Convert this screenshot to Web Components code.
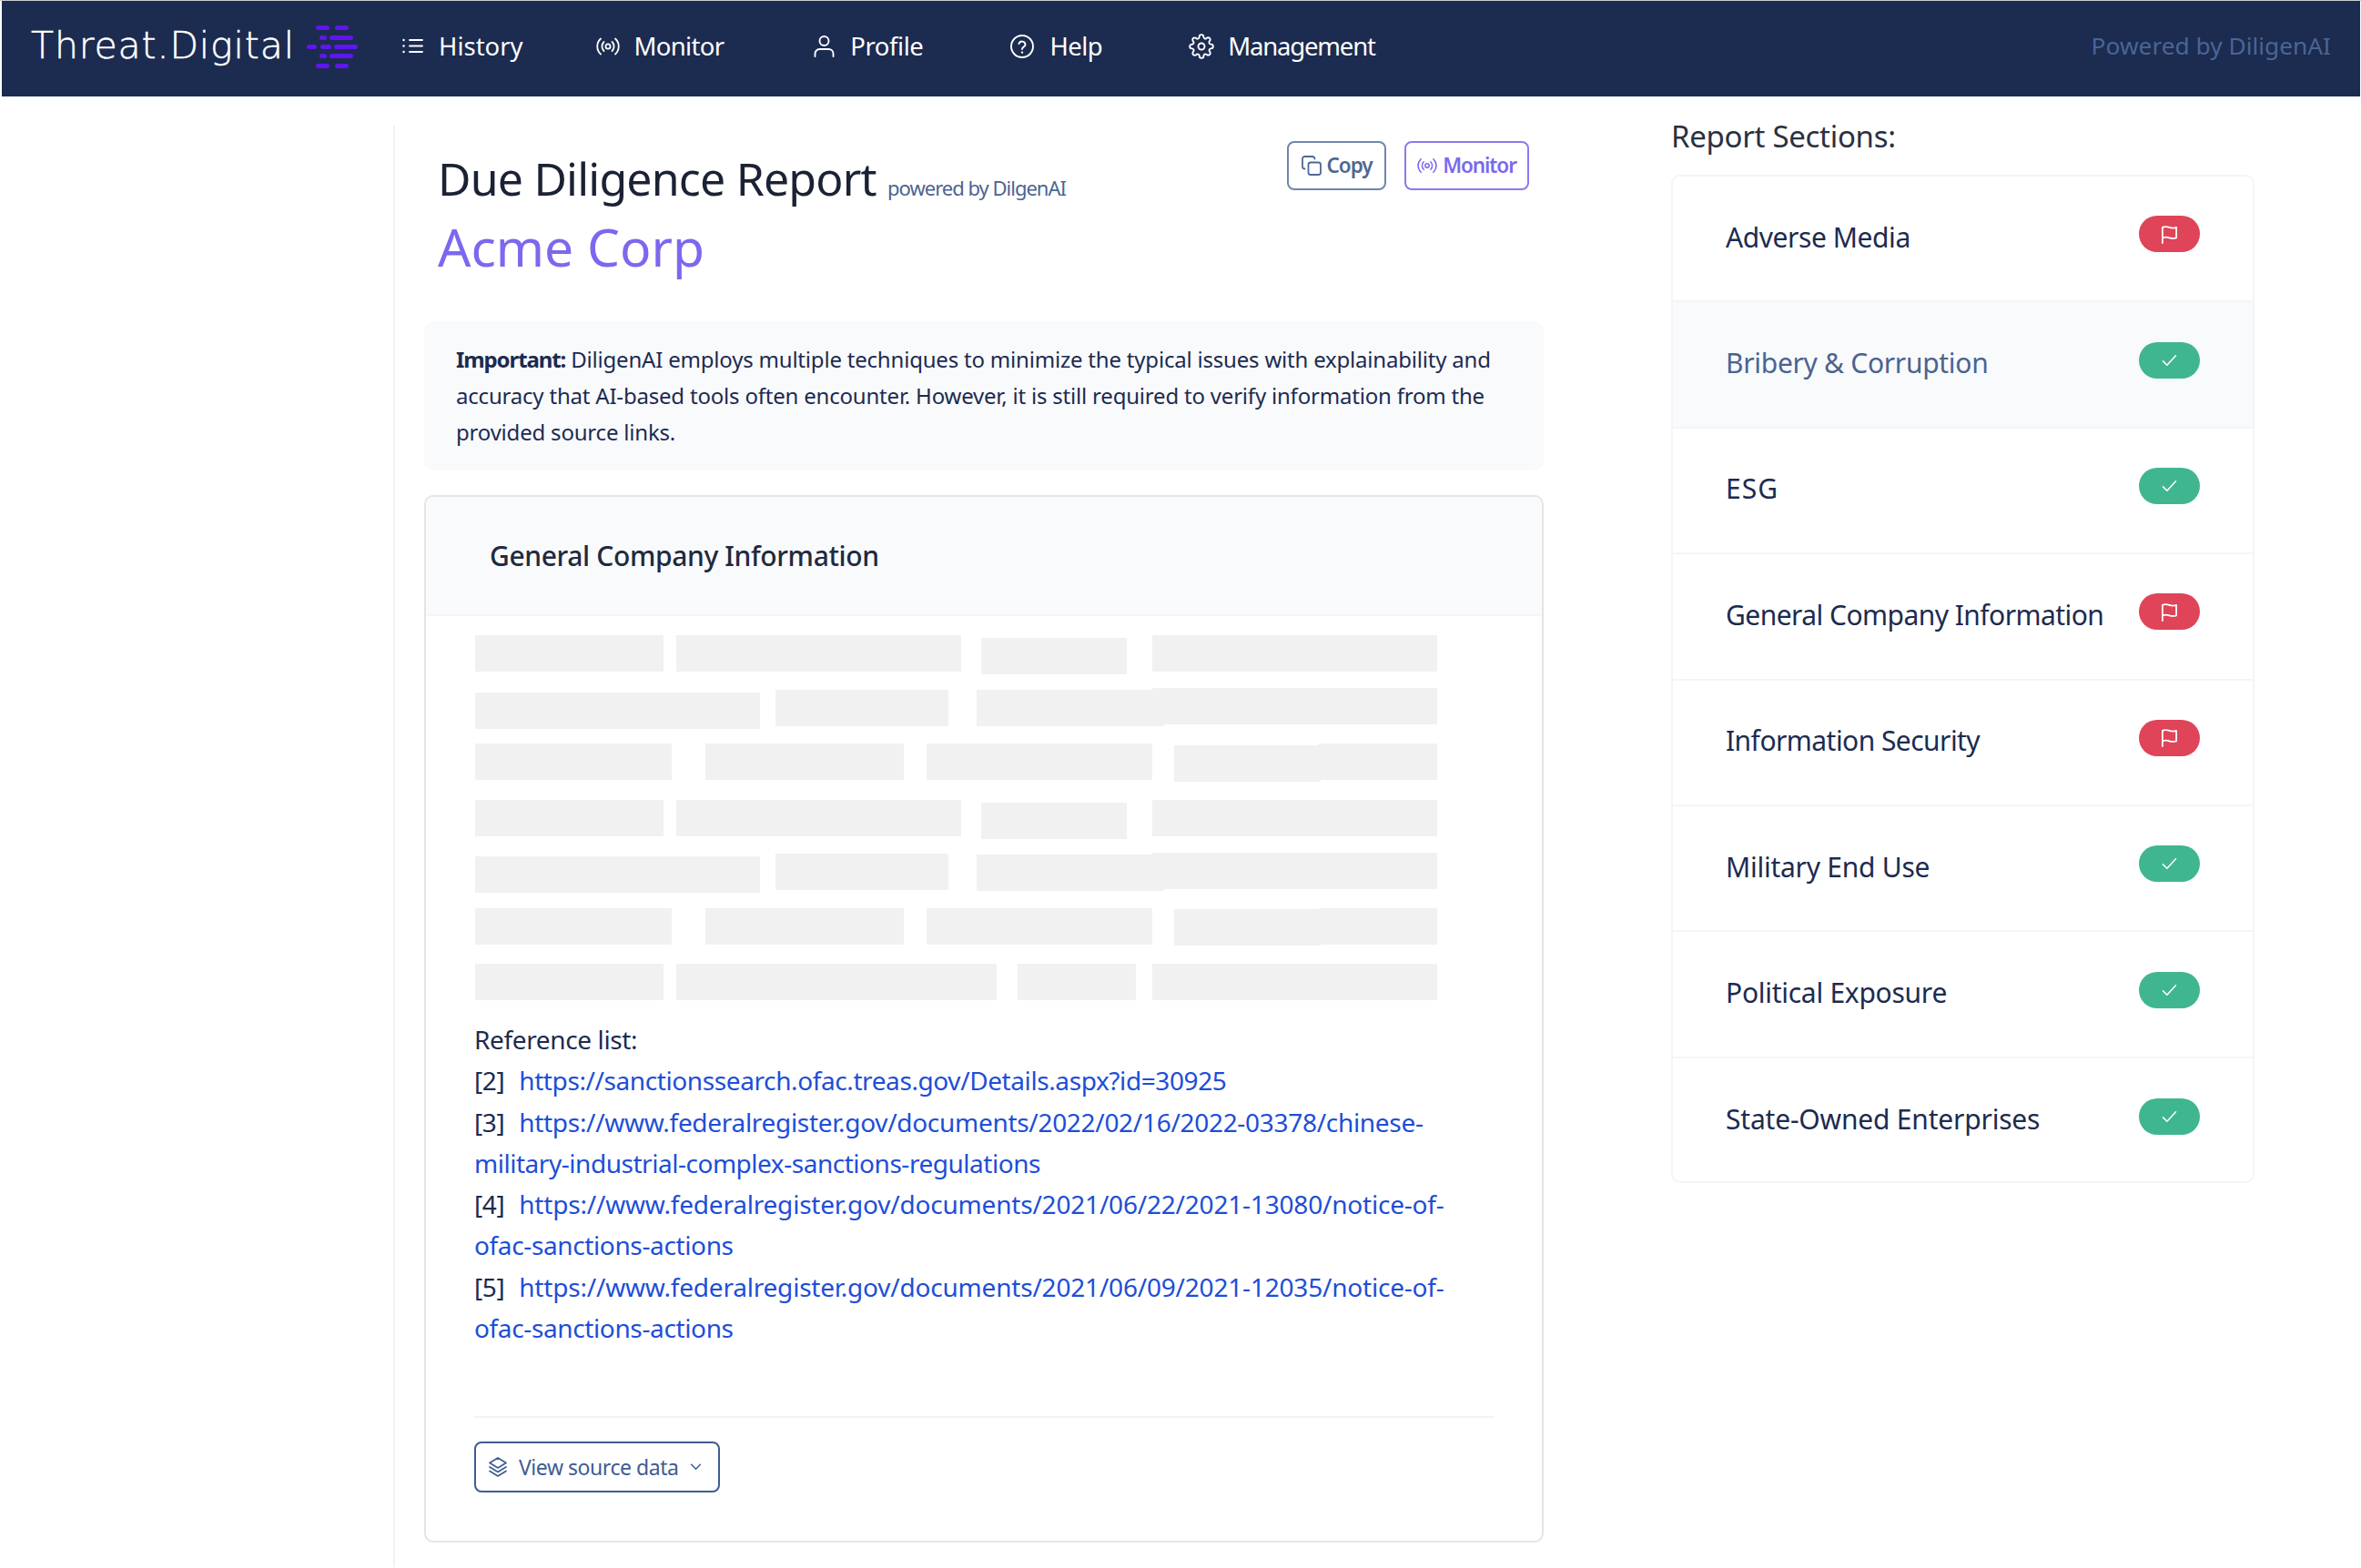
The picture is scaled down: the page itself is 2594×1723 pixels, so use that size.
<!DOCTYPE html>
<html lang="en"><head><meta charset="utf-8"><title>Due Diligence Report</title>
<style>
html,body{margin:0;padding:0;background:#fff}
body{font-family:"Noto Sans","Liberation Sans",sans-serif;color:#1c2b50;border-top:1px solid #c9cbd0;min-height:1722px;box-sizing:border-box}
</style></head><body>
<app-navbar>
  <nav-item icon="list" style="--w:23px;--h:17px;--gap:17px;--ls:0px;margin-left:0">History</nav-item>
  <nav-item icon="broadcast" style="--w:26px;--h:20px;--gap:16px;--ls:-.7px;margin-left:80px">Monitor</nav-item>
  <nav-item icon="user" style="--w:23px;--h:24px;--gap:17px;--ls:-.45px;margin-left:99px">Profile</nav-item>
  <nav-item icon="help" style="--w:26px;--h:26px;--gap:17px;--ls:-.5px;margin-left:96px">Help</nav-item>
  <nav-item icon="gear" style="--w:28px;--h:28px;--gap:15px;--ls:-1.2px;margin-left:95px">Management</nav-item>
</app-navbar>
<report-page>
  <report-main>
    <report-header></report-header>
    <notice-box><b>Important:</b> DiligenAI employs multiple techniques to minimize the typical issues with explainability and accuracy that AI-based tools often encounter. However, it is still required to verify information from the provided source links.</notice-box>
    <info-card heading="General Company Information">
      <redact-lines></redact-lines>
      <reference-list></reference-list>
    </info-card>
  </report-main>
  <section-panel heading="Report Sections:">
    <section-row status="flag" style="letter-spacing:-.43px">Adverse Media</section-row>
    <section-row status="ok" active style="letter-spacing:-.3px">Bribery &amp; Corruption</section-row>
    <section-row status="ok" style="letter-spacing:1.1px">ESG</section-row>
    <section-row status="flag">General Company Information</section-row>
    <section-row status="flag">Information Security</section-row>
    <section-row status="ok" style="letter-spacing:-.25px">Military End Use</section-row>
    <section-row status="ok" style="letter-spacing:-.27px">Political Exposure</section-row>
    <section-row status="ok" last style="letter-spacing:-.2px">State-Owned Enterprises</section-row>
  </section-panel>
</report-page>
<script>
const ICONS={
 list:'<svg viewBox="0 0 23 17" fill="none" stroke="currentColor" stroke-width="1.8" stroke-linecap="round"><path d="M8 2h14M8 8.500h14M8 15h14"/><path d="M1.500 2h.1M1.500 8.500h.1M1.500 15h.1" stroke-width="2.400"/></svg>',
 broadcast:'<svg viewBox="0 0 26 20" fill="none" stroke="currentColor" stroke-width="1.8" stroke-linecap="round"><circle cx="13" cy="10" r="2.600"/><path d="M8.500 5a7 7 0 0 0 0 10M17.500 5a7 7 0 0 1 0 10M5 1.500a11.500 11.500 0 0 0 0 17M21 1.500a11.500 11.500 0 0 1 0 17"/></svg>',
 user:'<svg viewBox="0 0 23 24" fill="none" stroke="currentColor" stroke-width="1.900" stroke-linecap="round"><circle cx="11.500" cy="6" r="5"/><path d="M1.500 23v-3a5 5 0 0 1 5-5h10a5 5 0 0 1 5 5v3"/></svg>',
 help:'<svg viewBox="0 0 26 26" fill="none" stroke="currentColor" stroke-width="1.900" stroke-linecap="round"><circle cx="13" cy="13" r="12"/><path d="M9.500 10a3.600 3.600 0 0 1 7 1c0 2.400-3.500 2.800-3.500 5"/><path d="M13 19.700h.1" stroke-width="2.300"/></svg>',
 gear:'<svg viewBox="0 0 24 24" fill="none" stroke="currentColor" stroke-width="1.600" stroke-linecap="round" stroke-linejoin="round"><circle cx="12" cy="12" r="3"/><path d="M19.400 15a1.650 1.650 0 0 0 .33 1.820l.06.06a2 2 0 0 1 0 2.830 2 2 0 0 1-2.830 0l-.06-.06a1.650 1.650 0 0 0-1.820-.33 1.650 1.650 0 0 0-1 1.510V21a2 2 0 0 1-2 2 2 2 0 0 1-2-2v-.09A1.650 1.650 0 0 0 9 19.400a1.650 1.650 0 0 0-1.820.33l-.06.06a2 2 0 0 1-2.830 0 2 2 0 0 1 0-2.830l.06-.06a1.650 1.650 0 0 0 .33-1.820 1.650 1.650 0 0 0-1.510-1H3a2 2 0 0 1-2-2 2 2 0 0 1 2-2h.09A1.650 1.650 0 0 0 4.600 9a1.650 1.650 0 0 0-.33-1.820l-.06-.06a2 2 0 0 1 0-2.830 2 2 0 0 1 2.830 0l.06.06a1.650 1.650 0 0 0 1.820.33H9a1.650 1.650 0 0 0 1-1.510V3a2 2 0 0 1 2-2 2 2 0 0 1 2 2v.09a1.650 1.650 0 0 0 1 1.510 1.650 1.650 0 0 0 1.820-.33l.06-.06a2 2 0 0 1 2.830 0 2 2 0 0 1 0 2.830l-.06.06a1.650 1.650 0 0 0-.33 1.820V9a1.650 1.650 0 0 0 1.510 1H21a2 2 0 0 1 2 2 2 2 0 0 1-2 2h-.09a1.650 1.650 0 0 0-1.510 1z"/></svg>',
 copy:'<svg viewBox="0 0 22 22" fill="none" stroke="currentColor" stroke-width="1.800" stroke-linecap="round" stroke-linejoin="round"><rect x="7.500" y="7.500" width="13.500" height="13.500" rx="2.500"/><path d="M3.500 14.500A2.500 2.500 0 0 1 1 12V3.500A2.500 2.500 0 0 1 3.500 1H12a2.500 2.500 0 0 1 2.500 2.500"/></svg>',
 layers:'<svg viewBox="0 0 22 22" fill="none" stroke="currentColor" stroke-width="1.700" stroke-linecap="round" stroke-linejoin="round"><path d="M11 1 20 6.500 11 12 2 6.500z"/><path d="M2 11 11 16.500 20 11M2 15.500 11 21 20 15.500"/></svg>',
 chevron:'<svg viewBox="0 0 14 9" fill="none" stroke="currentColor" stroke-width="1.700" stroke-linecap="round" stroke-linejoin="round"><path d="M1.500 1.500 7 7l5.500-5.500"/></svg>',
 flag:'<svg viewBox="0 0 20 22" fill="none" stroke="currentColor" stroke-width="1.900" stroke-linecap="round" stroke-linejoin="round"><path d="M2 21V3c3-1.500 5-1 8 0s5 1 8 0v12c-3 1-5 1-8 0s-5-1-8 0"/></svg>',
 check:'<svg viewBox="0 0 20 16" fill="none" stroke="currentColor" stroke-width="1.700" stroke-linecap="round" stroke-linejoin="round"><path d="M2 9l5 5L18 2"/></svg>'
};
function def(name,css,html,setup){
  customElements.define(name,class extends HTMLElement{
    constructor(){super();this.attachShadow({mode:'open'});}
    connectedCallback(){
      if(this._d)return;this._d=1;
      const h=typeof html==='function'?html(this):html;
      this.shadowRoot.innerHTML='<style>'+css+'</style>'+h;
      if(setup)setup(this);
    }
  });
}
def('ui-icon',':host{display:inline-flex;flex:none;width:var(--w,24px);height:var(--h,24px)} svg{width:100%;height:100%;display:block}',e=>ICONS[e.getAttribute('name')]||'');
def('app-navbar',`
 :host{display:flex;align-items:center;height:105px;margin:0 1px 0 2px;background:#1c2b50;color:#fff;box-sizing:border-box;padding-left:32px}
 .logo{display:flex;align-items:center;width:408px;flex:none}
 .name{font:200 41px/1 "DejaVu Sans",Inter,sans-serif;letter-spacing:.85px;color:#fff;-webkit-text-stroke:.5px #fff;width:303px;flex:none;white-space:nowrap;position:relative;top:-3px}
 svg{width:57px;height:48px;display:block;position:relative;top:-2px}
 nav{display:flex;align-items:center;flex:1}
 .pw{margin-left:auto;margin-right:32px;font:400 26.300px/1 "Noto Sans",sans-serif;color:#4a6593;position:relative;top:-3px}
`,`<div class="logo"><span class="name">Threat.Digital</span>
 <svg viewBox="337 31 57 48" fill="#5f16ee"><rect x="347" y="31" width="15" height="5" rx="2.500"/><rect x="368" y="31" width="15" height="5" rx="2.500"/><rect x="351" y="42" width="8" height="5" rx="2.500"/><rect x="362" y="42" width="26" height="5" rx="2.500"/><rect x="337" y="52" width="11" height="5" rx="2.500"/><rect x="352" y="52" width="12" height="5" rx="2.500"/><rect x="367" y="52" width="26" height="5" rx="2.500"/><rect x="351" y="62" width="8" height="5" rx="2.500"/><rect x="362" y="62" width="26" height="5" rx="2.500"/><rect x="347" y="73" width="15" height="5" rx="2.500"/><rect x="368" y="73" width="15" height="5" rx="2.500"/></svg></div>
 <nav><slot></slot></nav><span class="pw">Powered by DiligenAI</span>`);
def('nav-item',`:host{display:inline-flex;align-items:center;color:#fff;font:400 27.500px/1.200 "Noto Sans",sans-serif;letter-spacing:var(--ls,0);position:relative;top:-3px}
 span{margin-left:var(--gap,16px);display:block}`,
 e=>`<ui-icon name="${e.getAttribute('icon')}"></ui-icon><span><slot></slot></span>`);
def('report-page',':host{display:flex;align-items:flex-start;padding-left:432px;min-height:1616px;box-sizing:border-box}','<slot></slot>');
def('report-main',':host{display:block;box-sizing:border-box;width:1264px;margin-top:32px;min-height:1584px;border-left:2px solid #f1f2f5;padding-left:32px}','<slot></slot>');
def('report-header',`:host{display:flex;justify-content:space-between;height:215px;padding:0 16px 0 15px;box-sizing:border-box;width:1230px}
 h1{margin:23px 0 0;font:400 50px/70px "Noto Sans",sans-serif;letter-spacing:-.8px;color:#1a2233;white-space:nowrap}
 small{font-size:22px;letter-spacing:-1px;color:#4c6491}
 h2{margin:0;font:400 57px/60px "Noto Sans",sans-serif;color:#7b68ee}
 .btns{display:flex;gap:20px;margin-top:17px;align-items:flex-start}
`,`<div><h1>Due Diligence Report <small>powered by DilgenAI</small></h1><h2>Acme Corp</h2></div>
 <div class="btns"><out-btn icon="copy" w="22" h="22" style="--c:#4f6893;--b:#6d86ab;width:109px">Copy</out-btn><out-btn icon="broadcast" w="22" h="18" style="--c:#7b68ee;--b:#8b79f0;width:137px">Monitor</out-btn></div>`);
def('out-btn',`:host{display:inline-flex;align-items:center;justify-content:center;gap:6px;height:54px;box-sizing:border-box;border:2px solid var(--b);border-radius:8px;color:var(--c);font:600 22.500px/1 "Noto Sans",sans-serif;letter-spacing:-1.1px}`,
 e=>`<ui-icon name="${e.getAttribute('icon')}" style="--w:${e.getAttribute('w')}px;--h:${e.getAttribute('h')}px"></ui-icon><span><slot></slot></span>`);
def('notice-box',`:host{display:block;box-sizing:border-box;width:1230px;height:164px;background:#f9fafc;border-radius:10px;padding:22px 36px 22px 35px;font:400 24px/40px "Noto Sans",sans-serif;letter-spacing:-.2px;color:#1c2b50;margin-bottom:27px}
 ::slotted(b){letter-spacing:-1.1px}`,'<slot></slot>');
def('info-card',`:host{display:block;box-sizing:border-box;width:1230px;height:1151px;border:2px solid #e3e4e6;border-radius:10px;overflow:hidden;background:#fff}
 header{height:131px;box-sizing:border-box;background:#f9fafc;border-bottom:2px solid #f3f5f8;padding-left:70px;display:flex;align-items:center;font:500 30px/1 "Noto Sans",sans-serif;letter-spacing:-.37px;color:#1f2a3e}
 .body{padding:21px 53px 0 53px}
`,e=>`<header>${e.getAttribute('heading')}</header><div class="body"><slot></slot></div>`);
const REDACT=[
 [698,756,[[522,729,698],[743,1056,698],[1078,1238,701],[1266,1579,698]]],
 [756,817,[[522,835,761],[852,1042,758],[1073,1279,758],[1266,1579,756]]],
 [817,879,[[522,738,817],[775,993,817],[1018,1266,817],[1290,1451,819],[1449,1579,817]]],
 [879,937,[[522,729,879],[743,1056,879],[1078,1238,882],[1266,1579,879]]],
 [937,998,[[522,835,941],[852,1042,938],[1073,1279,939],[1266,1579,937]]],
 [998,1059,[[522,738,998],[775,993,998],[1018,1266,998],[1290,1451,999],[1449,1579,998]]],
 [1059,1120,[[522,729,1059],[743,1095,1059],[1118,1248,1059],[1266,1579,1059]]]];
def('redact-lines',`:host{display:block} .r{display:flex;align-items:flex-start} i{display:block;height:40px;background:#f1f1f1;flex:none}`,
 ()=>REDACT.map(([t,n,ps])=>{let p=521;return `<div class="r" style="height:${n-t}px">`+ps.map(([a,b,y])=>{const s=`<i style="width:${b-a}px;margin-left:${a-p}px;margin-top:${y-t}px"></i>`;p=b;return s;}).join('')+'</div>';}).join(''));
def('reference-list',`:host{display:block;font:400 28px/45.300px "Noto Sans",sans-serif;letter-spacing:-.37px;color:#1c2b50}
 a{color:#1d4ed8;text-decoration:none}
 a.f{margin-left:9px}
 .foot{border-top:2px solid #f1f3f8;margin-top:74px;padding-top:26px;letter-spacing:0}
 .src{display:flex;align-items:center;box-sizing:border-box;width:270px;height:56px;border:2px solid #3f5c92;border-radius:8px;color:#3f5c92;font:400 23px/1 "Noto Sans",sans-serif;letter-spacing:-.45px;padding-left:13px}
 .src span{margin:0 12px 0 12px}
`,`<div>Reference list:</div>
<div>[2] <a class="f" style="letter-spacing:-.4px">https://sanctionssearch.ofac.treas.gov/Details.aspx?id=30925</a></div>
<div>[3] <a class="f" style="letter-spacing:-.3px">https://www.federalregister.gov/documents/2022/02/16/2022-03378/chinese-</a></div>
<div><a style="letter-spacing:-.47px">military-industrial-complex-sanctions-regulations</a></div>
<div>[4] <a class="f" style="letter-spacing:-.2px">https://www.federalregister.gov/documents/2021/06/22/2021-13080/notice-of-</a></div>
<div><a>ofac-sanctions-actions</a></div>
<div>[5] <a class="f" style="letter-spacing:-.2px">https://www.federalregister.gov/documents/2021/06/09/2021-12035/notice-of-</a></div>
<div><a>ofac-sanctions-actions</a></div>
<div class="foot"><div class="src"><ui-icon name="layers" style="--w:22px;--h:22px"></ui-icon><span>View source data</span><ui-icon name="chevron" style="--w:13px;--h:8px"></ui-icon></div></div>`);
def('section-panel',`:host{display:block;box-sizing:border-box;width:641px;margin-left:140px;padding-top:22px}
 h3{margin:0 0 20px;font:400 33px/44px "Noto Sans",sans-serif;letter-spacing:-.3px;color:#2a3140}
 .box{border:2px solid #f4f5f9;border-radius:10px;overflow:hidden}
`,e=>`<h3>${e.getAttribute('heading')}</h3><div class="box"><slot></slot></div>`);
def('section-row',`:host{display:flex;align-items:center;justify-content:space-between;box-sizing:border-box;height:138.400px;padding:0 58px 3px 58px;border-bottom:2px solid #f4f5f9;font:400 30px/1 "Noto Sans",sans-serif;letter-spacing:-.55px;color:#1c2b50}
 :host([active]){background:#f9fafc;color:#4b6391}
 :host([last]){border-bottom:0;height:135.500px;padding-bottom:0}
 .b{width:67px;height:40px;border-radius:20px;display:flex;align-items:center;justify-content:center;color:#fff;flex:none;margin-top:-7px}
 .flag{background:#df4459}.ok{background:#40b690}
`,e=>{const s=e.getAttribute('status');return `<span><slot></slot></span><span class="b ${s}"><ui-icon name="${s==='ok'?'check':'flag'}" style="--w:19px;--h:${s==='ok'?14:21}px"></ui-icon></span>`;});
</script>
</body></html>
